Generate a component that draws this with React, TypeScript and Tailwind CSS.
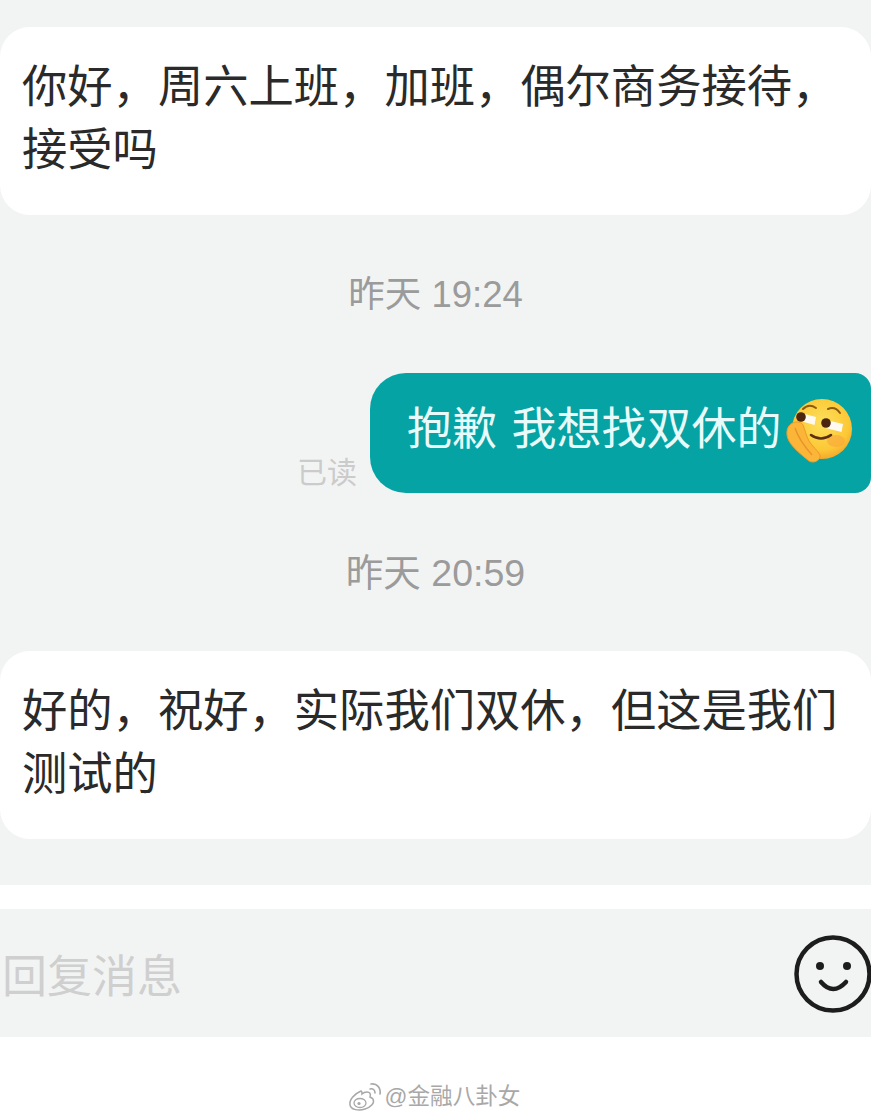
const cjk = "font-['Liberation_Sans','Noto_Sans_CJK_SC',sans-serif]";

function Emoji() {
  return (
    <svg width="70" height="70" viewBox="0 0 70 70" className="shrink-0">
      <defs>
        <radialGradient id="f" cx="50%" cy="40%" r="60%">
          <stop offset="0%" stopColor="#fde05c" />
          <stop offset="75%" stopColor="#fcc836" />
          <stop offset="100%" stopColor="#f5a82c" />
        </radialGradient>
      </defs>
      <circle cx="36" cy="34" r="30" fill="url(#f)" />
      <ellipse cx="50" cy="46" rx="9" ry="6" fill="#f8a23c" opacity="0.55" />
      <path d="M17 14q6-6 13-1M42 14q7-3 12 4" fill="none" stroke="#8a5a10" strokeWidth="2" strokeLinecap="round" />
      <path d="M15 18l15 4-1.500 8-14-4z" fill="#fffaf0" />
      <path d="M40 25l17 4-1.500 8-16-4z" fill="#fffaf0" />
      <circle cx="15" cy="22" r="4.800" fill="#4a2510" />
      <circle cx="40" cy="28" r="4.800" fill="#4a2510" />
      <path d="M25 40q10 7 20 0" fill="none" stroke="#5a3010" strokeWidth="2.600" strokeLinecap="round" />
      <path d="M11 27c-6 0-11 5-10 13 1 9 11 17 22 26 5 3 12-1 11-6-2-4-8-9-11-14-3-5-4-12-6-16-1-2-3-3-6-3z" fill="#fbb538" stroke="#ee9a28" strokeWidth="1" />
      <path d="M9 33c3 9 9 18 17 27" fill="none" stroke="#e8962a" strokeWidth="1.500" />
    </svg>
  );
}

function Smile() {
  return (
    <svg width="78" height="78" viewBox="0 0 78 78" fill="none" stroke="#1d1d1d">
      <circle cx="39" cy="39" r="36.5" strokeWidth="4.5" />
      <circle cx="26" cy="31" r="4" fill="#1d1d1d" stroke="none" />
      <circle cx="53" cy="31" r="4" fill="#1d1d1d" stroke="none" />
      <path d="M27 47q12 14 25 0" strokeWidth="4.5" strokeLinecap="round" />
    </svg>
  );
}

function Weibo() {
  return (
    <svg width="34" height="30" viewBox="0 0 34 30" fill="none" className="shrink-0">
      <path d="M13 9C6 12 1 18 2 23c1 5 9 6 15 4 6-2 10-6 8-10-1-1-3-2-3-2 1-3 0-5-3-5-2 0-4 1-5 2 0-2-.5-3-1-3z" fill="#fff" stroke="#a8a8a8" strokeWidth="1.5" />
      <ellipse cx="12" cy="21" rx="6" ry="4.5" stroke="#a8a8a8" strokeWidth="1.3" />
      <circle cx="11" cy="21.5" r="1.6" fill="#a8a8a8" />
      <path d="M22 7c3-1 5 1 5 4M23 2c6-1 10 4 9 10" stroke="#a8a8a8" strokeWidth="1.6" strokeLinecap="round" />
    </svg>
  );
}

function Left({ lines }: { lines: string[] }) {
  return (
    <div className="bg-white rounded-[30px] pl-[22px] pt-[29px] h-[188px] text-[45.3px] leading-[63px] text-[#2a2a2a] whitespace-nowrap">
      {lines.map((l) => (
        <div key={l}>{l}</div>
      ))}
    </div>
  );
}

export default function App() {
  return (
    <div className={`${cjk} w-[871px] h-[1118px] overflow-hidden bg-white flex flex-col`}>
      <div className="bg-[#f2f4f4] h-[885px] pt-[27px] shrink-0 flex flex-col">
        <Left lines={["你好，周六上班，加班，偶尔商务接待，", "接受吗"]} />
        <div className="mt-[56px] h-[46px] pt-[2px] flex items-center justify-center text-[36.5px] text-[#9b9b9b]">昨天 19:24</div>
        <div className="mt-[56px] flex items-end justify-end">
          <span className="text-[30px] leading-[36px] text-[#cbcbcb] mr-[13px] mb-[2px]">已读</span>
          <div className="w-[501px] h-[120px] bg-[#05a3a4] rounded-l-[36px] rounded-r-[16px] flex items-start pl-[37px] pt-[21px] text-[#e8fbfa]">
            <span className="text-[45px] leading-[72px] [word-spacing:2px] whitespace-nowrap">抱歉 我想找双休的</span>
            <span className="ml-[4px] mt-[1px]"><Emoji /></span>
          </div>
        </div>
        <div className="mt-[56px] h-[46px] pt-[2px] flex items-center justify-center text-[37.5px] text-[#9b9b9b]">昨天 20:59</div>
        <div className="mt-[56px]">
          <Left lines={["好的，祝好，实际我们双休，但这是我们", "测试的"]} />
        </div>
      </div>
      <div className="h-[24px] shrink-0" />
      <div className="bg-[#f2f4f4] h-[128px] shrink-0 flex items-center justify-between">
        <span className="pl-[2px] pt-[10px] text-[45px] text-[#cfcfcf]">回复消息</span>
        <span className="-mr-[1px] mt-[2px]"><Smile /></span>
      </div>
      <div className="mt-[45px] flex items-center justify-center gap-[3px] pr-[3px]">
        <Weibo />
        <span className="text-[22.6px] leading-[30px] text-[#a8a8a8]">@金融八卦女</span>
      </div>
    </div>
  );
}
